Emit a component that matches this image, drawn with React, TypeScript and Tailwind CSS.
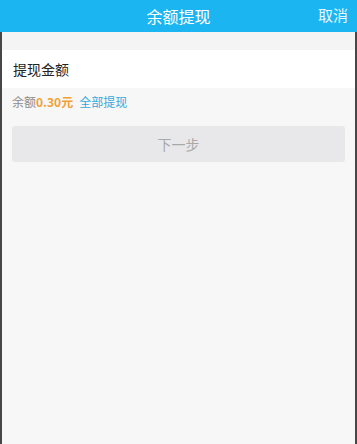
export default function App() {
  return (
    <div className="w-[357px] h-[444px] flex flex-col bg-[#f7f7f7] font-['Noto_Sans_CJK_SC','Noto_Sans',sans-serif]">
      {/* Header */}
      <div className="relative h-[32px] shrink-0 bg-[#1bb5f1] flex items-center justify-center">
        <span className="text-[16px] text-white leading-none">余额提现</span>
        <span className="absolute right-[9px] top-[7px] text-[15px] text-white/90 leading-none">取消</span>
      </div>

      <div className="flex-1 flex flex-col border-l-2 border-r-2 border-[#474747]">
        <div className="h-[18px] bg-[#f4f4f4]" />

        <div className="h-[38px] bg-white flex items-center px-[11px]">
          <span className="text-[14px] text-[#222222] leading-none">提现金额</span>
        </div>

        <div className="h-[28px] flex items-center px-[10px] text-[12px] leading-none">
          <span className="text-[#8c8c8c]">余额</span>
          <span className="text-[#f0a035] font-bold">0.30元</span>
          <span className="ml-[6px] text-[#35a9db]">全部提现</span>
        </div>

        <div className="px-[10px] pt-[10px]">
          <div className="h-[36px] rounded-[3px] bg-[#e8e8ea] flex items-center justify-center">
            <span className="text-[14px] text-[#a9a9a9] leading-none">下一步</span>
          </div>
        </div>
      </div>
    </div>
  )
}
